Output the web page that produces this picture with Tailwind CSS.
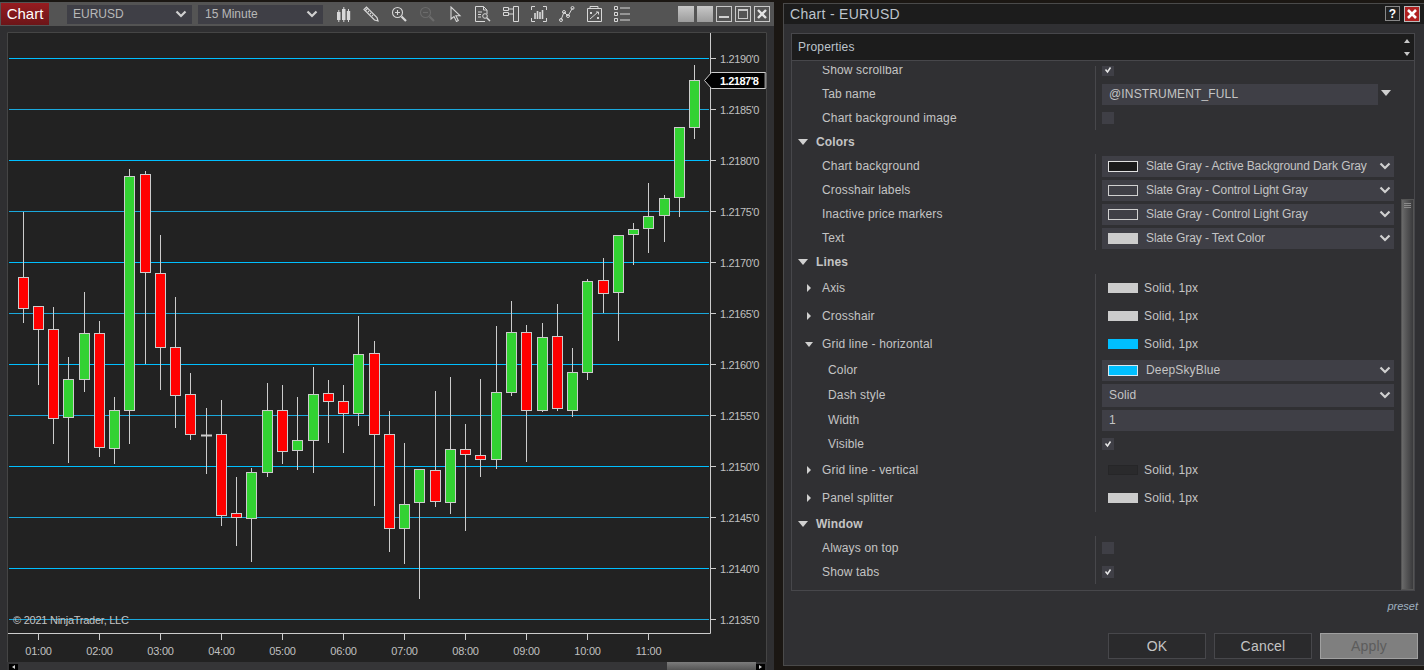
<!DOCTYPE html>
<html lang="en">

<head>
    <meta charset="UTF-8">
    <title>Chart - EURUSD</title>
    <script src="https://cdn.jsdelivr.net/npm/@tailwindcss/browser@4"></script>
</head>

<body class="bg-[#1b1713] font-['Liberation_Sans',Arial,sans-serif] text-xs text-[#c4c4c4] h-screen overflow-hidden flex items-start">

    <svg class="hidden">
        <symbol id="chev" viewBox="0 0 12 12"><path d="M1.5 3.5 6 8l4.5-4.5" fill="none" stroke="#d0d0d0" stroke-width="2.2" /></symbol>
        <symbol id="check" viewBox="0 0 12 12"><path d="M3.500 5.500 5.500 8 8.500 3.500" fill="none" stroke="#e8e8e8" stroke-width="1.500" /></symbol>
    </svg>

    <!-- chart window -->
    <div class="w-[774px] h-[668px] mt-[2px] shrink-0 flex flex-col bg-[#2f2f31]">
        <div class="h-[24px] shrink-0 flex items-center bg-[#545454] pl-px">
            <div class="w-[48px] h-[22px] flex items-center justify-center text-[15px] text-white bg-gradient-to-b from-[#971c20] to-[#6c1518]">Chart</div>
            <div class="w-[125px] h-[19px] ml-[18px] pl-[6px] pr-[5px] flex items-center justify-between bg-[#3f3f46] text-[#b8b8b8]">EURUSD<svg class="w-[12px] h-[12px]"><use href="#chev" /></svg></div>
            <div class="w-[125px] h-[19px] ml-[6px] pl-[7px] pr-[5px] flex items-center justify-between bg-[#3f3f46] text-[#b8b8b8]">15 Minute<svg class="w-[12px] h-[12px]"><use href="#chev" /></svg></div>

            <div class="flex items-center gap-[12px] ml-[12px] text-[#d8d8d8]">
                <svg class="w-[16px] h-[16px]" viewBox="0 0 16 16" fill="currentColor"><path d="M3.300 4h1v2h1.200v8h-1.200v2h-1v-2H2V6h1.300zM8.300 1h1v2h1.200v11H9.300v2h-1v-2H7V3h1.300zM13 3h1v2h1.200v9H14v2h-1v-2h-1.200V5H13z" /></svg>
                <svg class="w-[16px] h-[16px]" viewBox="0 0 16 16" fill="none" stroke="currentColor" stroke-width="1.2"><path d="M1 3.5 3.5 1 14 11.5 15 15l-3.5-1zM2.5 4.5l2-2M5 6l1-1M7 8l1-1M9 10l1-1" /></svg>
                <svg class="w-[16px] h-[16px]" viewBox="0 0 16 16" fill="none" stroke="currentColor" stroke-width="1.1"><circle cx="6.5" cy="6.5" r="5" /><path d="M6.5 4v5M4 6.5h5" /><path d="M10.5 10.5 15 15" stroke-width="2.2" /></svg>
                <svg class="w-[16px] h-[16px] text-[#6b6b6b]" viewBox="0 0 16 16" fill="none" stroke="currentColor" stroke-width="1.1"><circle cx="6.5" cy="6.5" r="5" /><path d="M4 6.5h5" /><path d="M10.5 10.5 15 15" stroke-width="2.2" /></svg>
                <svg class="w-[16px] h-[16px]" viewBox="0 0 16 16" fill="none" stroke="currentColor" stroke-width="1.1"><path d="M4 1v12l3-2.5 2.500 5 1.800-1-2.400-4.800H13z" /></svg>
                <svg class="w-[16px] h-[16px]" viewBox="0 0 16 16" fill="none" stroke="currentColor" stroke-width="1"><path d="M10 15.500H.5V.5h8l3.500 3.500v4M8.500 .5V4H12M3 6h4M3 8.500h3M3 11h3" /><circle cx="10" cy="10" r="2.300" /><path d="M11.700 11.700 15 15" stroke-width="1.500" /></svg>
                <svg class="w-[16px] h-[16px]" viewBox="0 0 16 16" fill="none" stroke="currentColor" stroke-width="1"><path d="M10.500 .5h5v15h-5zM.5 1.500h5v3h-5zM.5 6.500h5v3h-5zM5.500 3h5M5.500 8h5" /></svg>
                <svg class="w-[16px] h-[16px]" viewBox="0 0 16 16" fill="none" stroke="currentColor" stroke-width="1"><path d="M.5 4V.5H4M12 .5h3.500V4M.5 12v3.500H4M12 15.500h3.500V12" /><path d="M4 7v6M6.500 5v8M9 6v7M11.500 4v9" stroke-width="1.600" /></svg>
                <svg class="w-[16px] h-[16px]" viewBox="0 0 16 16" fill="none" stroke="currentColor" stroke-width="1"><path d="M2 14 5 6l4 4 4.500-8" /><circle cx="2" cy="14" r="1.500" /><circle cx="5" cy="6" r="1.500" /><circle cx="9" cy="10" r="1.500" /><circle cx="13.500" cy="2" r="1.500" /></svg>
                <svg class="w-[15px] h-[16px]" viewBox="0 0 15 16" fill="none" stroke="currentColor" stroke-width="1"><path d="M.5 2.500h14v13H.5zM3 .5h8v2H3zM3 6l2 2M5 6 3 8M10 11l2 2M12 11l-2 2M3 13l8-7M9 6h2.500v2.500" /></svg>
                <svg class="w-[16px] h-[16px]" viewBox="0 0 16 16" fill="none" stroke="currentColor" stroke-width="1"><path d="M.5 .5h3v3h-3zM.5 6.500h3v3h-3zM.5 12.500h3v3h-3zM6 2h10M6 8h10M6 14h10" /></svg>
            </div>

            <div class="flex items-center gap-[3px] ml-[48px]">
                <div class="w-[16px] h-[16px] bg-gradient-to-b from-[#c8c8c8] to-[#9c9c9c]"></div>
                <div class="w-[16px] h-[16px] bg-gradient-to-b from-[#c8c8c8] to-[#9c9c9c]"></div>
                <div class="w-[16px] h-[16px] border border-[#c8c8c8] flex items-end justify-center pb-[3px]"><div class="w-[10px] h-[2px] bg-[#d0d0d0]"></div></div>
                <div class="w-[16px] h-[16px] border border-[#c8c8c8] p-[2px]"><div class="w-full h-full border border-[#c8c8c8] border-t-2"></div></div>
                <div class="w-[16px] h-[16px] border border-[#c8c8c8] flex items-center justify-center"><svg class="w-[10px] h-[10px]" viewBox="0 0 10 10"><path d="M1 1l8 8M9 1 1 9" stroke="#e4e4e4" stroke-width="2.400" /></svg></div>
            </div>
        </div>

        <div class="flex-1 pt-[6px] pl-[7px] pr-[7px] flex flex-col min-h-0">
            <svg id="chart" class="w-[760px] h-[630px] shrink-0 bg-[#222222]" viewBox="7 32 760 630"></svg>
            <div class="h-[8px] w-[760px] shrink-0 flex items-end px-[2px] bg-[#353537]">
                <div class="w-[9px] h-[6px] bg-black flex items-center justify-center"><div class="border-y-[2px] border-y-transparent border-r-[3px] border-r-[#d0d0d0]"></div></div>
                <div class="w-[649px]"></div>
                <div class="w-[89px] h-[8px] bg-gradient-to-b from-[#7c7c7c] to-[#555555]"></div>
                <div class="w-[9px] h-[6px] bg-black flex items-center justify-center"><div class="border-y-[2px] border-y-transparent border-l-[3px] border-l-[#d0d0d0]"></div></div>
            </div>
        </div>
    </div>

    <!-- properties window -->
    <div class="w-[641px] h-[663px] ml-[9px] mt-[3px] shrink-0 flex flex-col bg-[#303033] border-l border-t border-b border-[#4a4a4a]">
        <div class="h-[20px] shrink-0 flex items-center pl-[6px] pr-[4px] pb-px bg-[#1c1c1c] text-sm text-[#bcc4cc]">
            <span class="flex-1 tracking-[0.3px]">Chart - EURUSD</span>
            <div class="w-[15px] h-[15px] border border-[#888888] bg-[#222222] flex items-center justify-center text-xs font-bold text-white">?</div>
            <div class="w-[16px] h-[16px] ml-[4px] border border-[#bbbbbb] bg-[#b02020] flex items-center justify-center"><svg class="w-[10px] h-[10px]" viewBox="0 0 10 10"><path d="M1 1l8 8M9 1 1 9" stroke="#ffffff" stroke-width="2.600" /></svg></div>
        </div>

        <div class="h-[558px] shrink-0 mt-[9px] ml-[7px] w-[624px] border border-[#47474b] flex flex-col">
            <div class="h-[27px] shrink-0 flex items-center bg-[#1c1c1c] border-b border-[#47474b] pl-[6px] text-[#bcc4cc] tracking-[0.2px]">
                <span class="flex-1">Properties</span>
                <div class="w-[14px] h-full flex flex-col items-center justify-center gap-[9px]">
                    <div class="border-x-[3px] border-x-transparent border-b-[4px] border-b-[#c8c8c8]"></div>
                    <div class="border-x-[3px] border-x-transparent border-t-[4px] border-t-[#c8c8c8]"></div>
                </div>
            </div>
            <div class="flex-1 flex min-h-0">
                <div class="w-[609px] mt-[5px] overflow-hidden tracking-[0.15px]">
                    <div class="-mt-[8px]">
                        <div class="h-[24px] flex items-center"><span class="w-[303px] pl-[30px]">Show scrollbar</span><div class="h-full border-l border-[#47474b] pl-[6px] flex items-center"><div class="w-[12px] h-[12px] bg-[#3f3f46]"><svg class="w-[12px] h-[12px]"><use href="#check" /></svg></div></div></div>
                        <div class="h-[24px] flex items-center"><span class="w-[303px] pl-[30px]">Tab name</span><div class="h-full border-l border-[#47474b] pl-[6px] flex items-center"><div class="w-[276px] h-[21px] pl-[7px] flex items-center bg-[#3f3f46]">@INSTRUMENT_FULL</div><div class="ml-[3px] border-x-[5px] border-x-transparent border-t-[6px] border-t-[#d0d0d0] mb-[2px]"></div></div></div>
                        <div class="h-[24px] flex items-center"><span class="w-[303px] pl-[30px]">Chart background image</span><div class="h-full border-l border-[#47474b] pl-[6px] flex items-center"><div class="w-[12px] h-[12px] bg-[#3f3f46]"></div></div></div>

                        <div class="h-[24px] flex items-center pl-[6px] font-bold"><div class="border-x-[5px] border-x-transparent border-t-[6px] border-t-[#d0d0d0]"></div><span class="ml-[8px]">Colors</span></div>
                        <div class="h-[24px] flex items-center"><span class="w-[303px] pl-[30px]">Chart background</span><div class="h-full border-l border-[#47474b] pl-[6px] flex items-center"><div class="w-[292px] h-[21px] pl-[6px] pr-[3px] flex items-center bg-[#3f3f46]"><div class="w-[30px] h-[11px] border border-[#e0e0e0] bg-[#1a1a1a]"></div><span class="ml-[8px] flex-1 tracking-[-0.1px]">Slate Gray - Active Background Dark Gray</span><svg class="w-[12px] h-[12px]"><use href="#chev" /></svg></div></div></div>
                        <div class="h-[24px] flex items-center"><span class="w-[303px] pl-[30px]">Crosshair labels</span><div class="h-full border-l border-[#47474b] pl-[6px] flex items-center"><div class="w-[292px] h-[21px] pl-[6px] pr-[3px] flex items-center bg-[#3f3f46]"><div class="w-[30px] h-[11px] border border-[#d0d0d0]"></div><span class="ml-[8px] flex-1 tracking-[-0.1px]">Slate Gray - Control Light Gray</span><svg class="w-[12px] h-[12px]"><use href="#chev" /></svg></div></div></div>
                        <div class="h-[24px] flex items-center"><span class="w-[303px] pl-[30px]">Inactive price markers</span><div class="h-full border-l border-[#47474b] pl-[6px] flex items-center"><div class="w-[292px] h-[21px] pl-[6px] pr-[3px] flex items-center bg-[#3f3f46]"><div class="w-[30px] h-[11px] border border-[#d0d0d0]"></div><span class="ml-[8px] flex-1 tracking-[-0.1px]">Slate Gray - Control Light Gray</span><svg class="w-[12px] h-[12px]"><use href="#chev" /></svg></div></div></div>
                        <div class="h-[24px] flex items-center"><span class="w-[303px] pl-[30px]">Text</span><div class="h-full border-l border-[#47474b] pl-[6px] flex items-center"><div class="w-[292px] h-[21px] pl-[6px] pr-[3px] flex items-center bg-[#3f3f46]"><div class="w-[30px] h-[11px] bg-[#cccccc]"></div><span class="ml-[8px] flex-1 tracking-[-0.1px]">Slate Gray - Text Color</span><svg class="w-[12px] h-[12px]"><use href="#chev" /></svg></div></div></div>

                        <div class="h-[24px] flex items-center pl-[6px] font-bold"><div class="border-x-[5px] border-x-transparent border-t-[6px] border-t-[#d0d0d0]"></div><span class="ml-[8px]">Lines</span></div>
                        <div class="h-[28px] flex items-center"><div class="w-[303px] pl-[15px] flex items-center"><div class="border-y-[4px] border-y-transparent border-l-[4px] border-l-[#d0d0d0]"></div><span class="ml-[11px]">Axis</span></div><div class="h-full border-l border-[#47474b] pl-[12px] flex items-center"><div class="w-[30px] h-[10px] bg-[#cccccc]"></div><span class="ml-[6px]">Solid, 1px</span></div></div>
                        <div class="h-[28px] flex items-center"><div class="w-[303px] pl-[15px] flex items-center"><div class="border-y-[4px] border-y-transparent border-l-[4px] border-l-[#d0d0d0]"></div><span class="ml-[11px]">Crosshair</span></div><div class="h-full border-l border-[#47474b] pl-[12px] flex items-center"><div class="w-[30px] h-[10px] bg-[#cccccc]"></div><span class="ml-[6px]">Solid, 1px</span></div></div>
                        <div class="h-[28px] flex items-center"><div class="w-[303px] pl-[13px] flex items-center"><div class="border-x-[4px] border-x-transparent border-t-[5px] border-t-[#d0d0d0]"></div><span class="ml-[9px]">Grid line - horizontal</span></div><div class="h-full border-l border-[#47474b] pl-[12px] flex items-center"><div class="w-[30px] h-[10px] bg-[#00bfff]"></div><span class="ml-[6px]">Solid, 1px</span></div></div>
                        <div class="h-[24px] flex items-center"><span class="w-[303px] pl-[36px]">Color</span><div class="h-full border-l border-[#47474b] pl-[6px] flex items-center"><div class="w-[292px] h-[21px] pl-[6px] pr-[3px] flex items-center bg-[#3f3f46]"><div class="w-[30px] h-[11px] border border-[#d8e8f0] bg-[#00bfff]"></div><span class="ml-[8px] flex-1">DeepSkyBlue</span><svg class="w-[12px] h-[12px]"><use href="#chev" /></svg></div></div></div>
                        <div class="h-[26px] flex items-center"><span class="w-[303px] pl-[36px]">Dash style</span><div class="h-full border-l border-[#47474b] pl-[6px] flex items-center"><div class="w-[292px] h-[23px] pl-[7px] pr-[3px] flex items-center bg-[#3f3f46]"><span class="flex-1">Solid</span><svg class="w-[12px] h-[12px]"><use href="#chev" /></svg></div></div></div>
                        <div class="h-[24px] flex items-center"><span class="w-[303px] pl-[36px]">Width</span><div class="h-full border-l border-[#47474b] pl-[6px] flex items-center"><div class="w-[292px] h-[21px] pl-[7px] flex items-center bg-[#3f3f46]">1</div></div></div>
                        <div class="h-[24px] flex items-center"><span class="w-[303px] pl-[36px]">Visible</span><div class="h-full border-l border-[#47474b] pl-[6px] flex items-center"><div class="w-[12px] h-[12px] bg-[#3f3f46]"><svg class="w-[12px] h-[12px]"><use href="#check" /></svg></div></div></div>
                        <div class="h-[28px] flex items-center"><div class="w-[303px] pl-[15px] flex items-center"><div class="border-y-[4px] border-y-transparent border-l-[4px] border-l-[#d0d0d0]"></div><span class="ml-[11px]">Grid line - vertical</span></div><div class="h-full border-l border-[#47474b] pl-[12px] flex items-center"><div class="w-[30px] h-[10px] bg-[#2a2a2c] border border-[#262628]"></div><span class="ml-[6px]">Solid, 1px</span></div></div>
                        <div class="h-[28px] flex items-center"><div class="w-[303px] pl-[15px] flex items-center"><div class="border-y-[4px] border-y-transparent border-l-[4px] border-l-[#d0d0d0]"></div><span class="ml-[11px]">Panel splitter</span></div><div class="h-full border-l border-[#47474b] pl-[12px] flex items-center"><div class="w-[30px] h-[10px] bg-[#cccccc]"></div><span class="ml-[6px]">Solid, 1px</span></div></div>

                        <div class="h-[24px] flex items-center pl-[6px] font-bold"><div class="border-x-[5px] border-x-transparent border-t-[6px] border-t-[#d0d0d0]"></div><span class="ml-[8px]">Window</span></div>
                        <div class="h-[24px] flex items-center"><span class="w-[303px] pl-[30px]">Always on top</span><div class="h-full border-l border-[#47474b] pl-[6px] flex items-center"><div class="w-[12px] h-[12px] bg-[#3f3f46]"></div></div></div>
                        <div class="h-[24px] flex items-center"><span class="w-[303px] pl-[30px]">Show tabs</span><div class="h-full border-l border-[#47474b] pl-[6px] flex items-center"><div class="w-[12px] h-[12px] bg-[#3f3f46]"><svg class="w-[12px] h-[12px]"><use href="#check" /></svg></div></div></div>
                    </div>
                </div>
                <div class="w-[13px] flex flex-col justify-end">
                    <div class="h-[391px] pt-[3px] flex flex-col gap-px items-center border border-[#555555] bg-gradient-to-r from-[#6a6a6a] to-[#3a3a3c]">
                        <div class="w-[7px] h-px bg-[#8a8a8a]"></div>
                        <div class="w-[7px] h-px bg-[#8a8a8a]"></div>
                        <div class="w-[7px] h-px bg-[#8a8a8a]"></div>
                    </div>
                </div>
            </div>
        </div>

        <div class="h-[42px] shrink-0 pr-[6px] pt-[8px] text-right italic text-[11px] text-[#9fb0c0]">preset</div>

        <div class="flex justify-end gap-[8px] pr-[6px]">
            <div class="w-[98px] h-[26px] flex items-center justify-center border border-[#47474b] bg-[#2a2a2c] text-sm tracking-[0.2px]">OK</div>
            <div class="w-[98px] h-[26px] flex items-center justify-center border border-[#47474b] bg-[#2a2a2c] text-sm tracking-[0.2px]">Cancel</div>
            <div class="w-[98px] h-[26px] flex items-center justify-center border border-[#a0a0a0] bg-[#7f7f7f] text-sm tracking-[0.2px] text-[#5c5c5c]">Apply</div>
        </div>
    </div>

    <script>
        // x, wick top, body top, body bottom, wick bottom, up/down
        const candles = [
            [23.5, 212, 277, 308, 323, 0], [38.5, 306, 306, 329, 385, 0], [53.5, 307, 329, 418, 444, 0],
            [68.5, 357, 379, 417, 463, 1], [84.5, 292, 333, 379, 392, 1], [99.5, 321, 333, 447, 457, 0],
            [114.5, 397, 410, 448, 464, 1], [129.5, 169, 176, 410, 444, 1], [145.5, 171, 174, 272, 364, 0],
            [160.5, 235, 273, 347, 390, 0], [175.5, 297, 347, 395, 428, 0], [190.5, 373, 394, 434, 440, 0],
            [206.5, 408, 435, 435, 474, 2], [221.5, 400, 434, 515, 526, 0], [236.5, 477, 513, 517, 546, 0],
            [251.5, 468, 472, 518, 562, 1], [267.5, 383, 410, 472, 477, 1], [282.5, 385, 410, 451, 464, 0],
            [297.5, 397, 440, 450, 470, 1], [313.5, 367, 394, 440, 473, 1], [328.5, 380, 393, 401, 443, 0],
            [343.5, 385, 401, 413, 453, 0], [358.5, 316, 354, 413, 426, 1], [374.5, 341, 353, 434, 506, 0],
            [389.5, 411, 434, 528, 552, 0], [404.5, 443, 504, 528, 564, 1], [419.5, 469, 469, 502, 599, 1],
            [435.5, 391, 470, 501, 507, 0], [450.5, 377, 449, 502, 514, 1], [465.5, 424, 449, 454, 531, 0],
            [480.5, 379, 455, 459, 477, 0], [496.5, 326, 392, 459, 469, 1], [511.5, 301, 332, 392, 396, 1],
            [526.5, 325, 332, 410, 462, 0], [542.5, 323, 337, 410, 412, 1], [557.5, 304, 336, 408, 411, 0],
            [572.5, 348, 372, 410, 417, 1], [587.5, 279, 281, 372, 380, 1], [603.5, 258, 280, 293, 313, 0],
            [618.5, 235, 235, 292, 341, 1], [633.5, 223, 229, 234, 265, 1], [648.5, 183, 216, 228, 253, 1],
            [664.5, 195, 198, 215, 242, 1], [679.5, 127, 127, 197, 217, 1], [694.5, 65, 80, 127, 139, 1]
        ];
        const prices = ["1.2190'0", "1.2185'0", "1.2180'0", "1.2175'0", "1.2170'0", "1.2165'0", "1.2160'0", "1.2155'0", "1.2150'0", "1.2145'0", "1.2140'0", "1.2135'0"];
        const times = ['01:00', '02:00', '03:00', '04:00', '05:00', '06:00', '07:00', '08:00', '09:00', '10:00', '11:00'];
        const timeX = [38.5, 99.5, 160.5, 221.5, 282.5, 343.5, 404.5, 465.5, 526.5, 587.5, 648.5];

        let s = '<path d="M7.500 662V32.500H766.500V662" fill="none" stroke="#454545" />';
        prices.forEach((p, i) => {
            const y = 58.5 + i * 51;
            const col = i % 2 ? '#1aa8dc' : '#00bfff';
            s += `<path d="M9 ${y}H709" stroke="${col}" />`;
            s += `<path d="M710 ${y}H716" stroke="#cccccc" />`;
            s += `<text x="720" y="${y + 4.5}" fill="#c0c0c0" font-size="11" letter-spacing="-0.35">${p}</text>`;
        });
        s += '<path d="M710.500 33V633.500H8" fill="none" stroke="#cccccc" />';
        times.forEach((t, i) => {
            s += `<path d="M${timeX[i]} 634V640" stroke="#cccccc" />`;
            s += `<text x="${timeX[i]}" y="655" fill="#c0c0c0" font-size="11" letter-spacing="-0.2" text-anchor="middle">${t}</text>`;
        });
        candles.forEach(([x, wt, bt, bb, wb, dir]) => {
            s += `<path d="M${x} ${wt}V${wb}" stroke="#cccccc" />`;
            if (dir === 2) {
                s += `<path d="M${x - 5.500} ${bt + .5}H${x + 5.500}" stroke="#cccccc" stroke-width="2" />`;
            } else {
                s += `<rect x="${x - 5}" y="${bt + .5}" width="10" height="${bb - bt}" fill="${dir ? '#32d232' : '#ff0000'}" stroke="#cccccc" />`;
            }
        });
        s += '<text x="13" y="624" fill="#c4c4c4" font-size="11" letter-spacing="-0.25">© 2021 NinjaTrader, LLC</text>';
        // last price marker
        s += '<path d="M704.500 80.500 711.500 72.500H765.500V88.500H711.500Z" fill="#000000" stroke="#cccccc" />';
        s += '<path d="M765.500 73V88" stroke="#888888" stroke-width="2" />';
        s += `<text x="720" y="85" fill="#ffffff" font-size="11" font-weight="bold" letter-spacing="-0.5">1.2187'8</text>`;
        document.getElementById('chart').innerHTML = s;
    </script>

</body>

</html>
